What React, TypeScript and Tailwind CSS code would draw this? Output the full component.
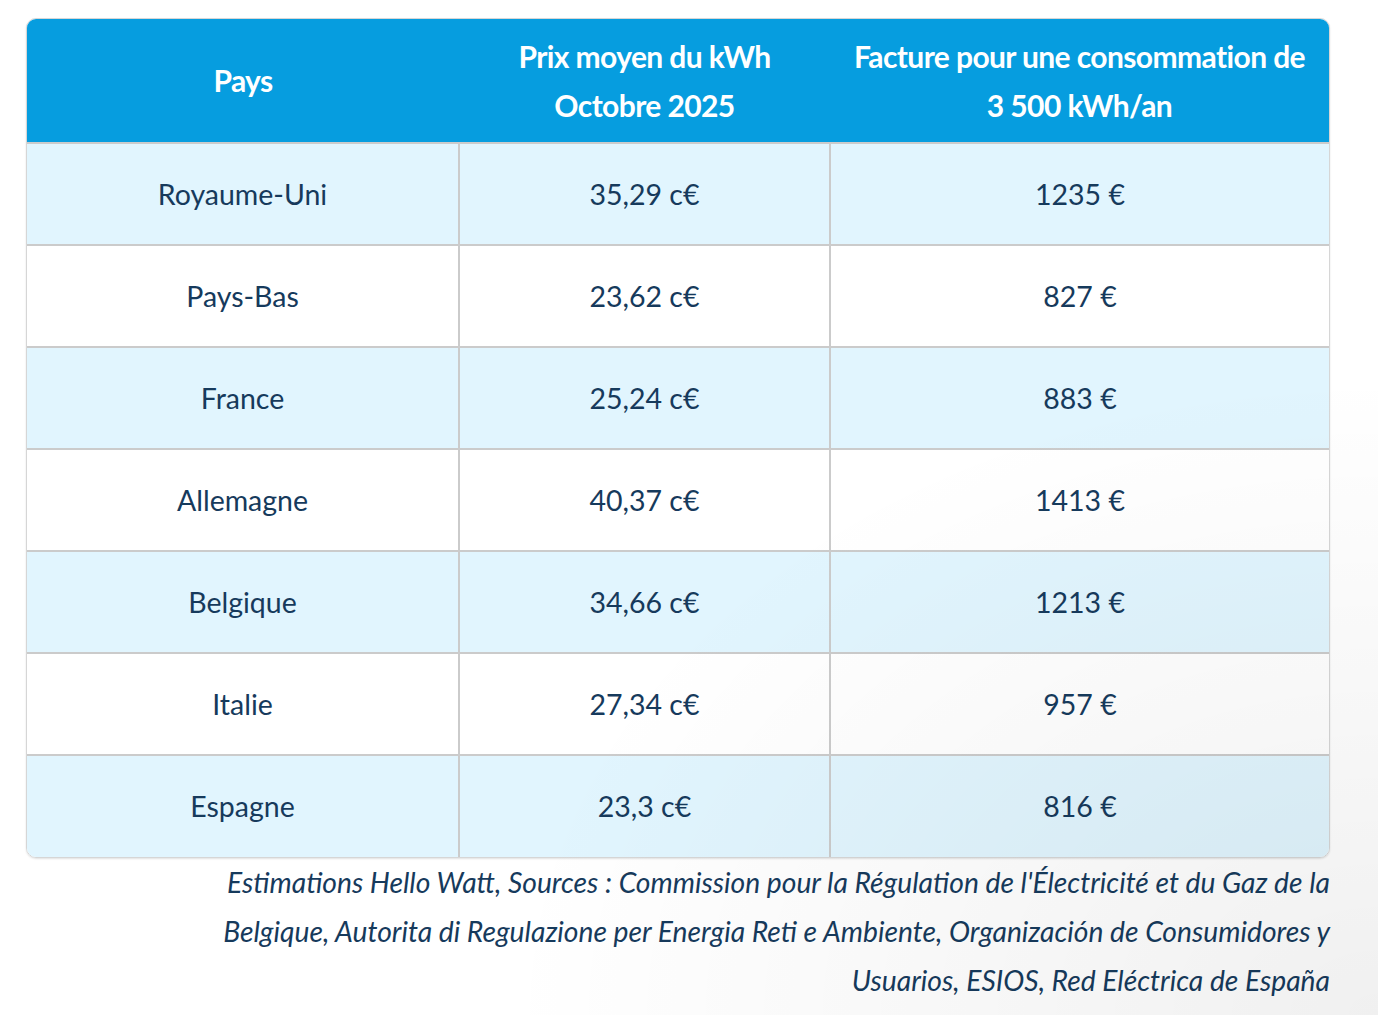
const rows = [
  { pays: "Royaume-Uni", prix: "35,29 c€", facture: "1235 €" },
  { pays: "Pays-Bas", prix: "23,62 c€", facture: "827 €" },
  { pays: "France", prix: "25,24 c€", facture: "883 €" },
  { pays: "Allemagne", prix: "40,37 c€", facture: "1413 €" },
  { pays: "Belgique", prix: "34,66 c€", facture: "1213 €" },
  { pays: "Italie", prix: "27,34 c€", facture: "957 €" },
  { pays: "Espagne", prix: "23,3 c€", facture: "816 €" },
]

export default function App() {
  return (
    <div className="relative min-h-screen w-full bg-white font-['Lato',sans-serif] text-[#163a5c]">
      <div className="pl-[26px] pt-[18px] w-[1330px]">
        <div className="overflow-hidden rounded-[10px] border border-[#d6d6d6] shadow-[0_1px_2px_rgba(0,0,0,0.12)]">
          <table className="w-full border-collapse table-fixed">
            <colgroup>
              <col className="w-[432px]" />
              <col className="w-[371px]" />
              <col />
            </colgroup>
            <thead>
              <tr className="bg-[#069ddf] text-white h-[124px]">
                <th className="font-bold text-[30px] leading-[49px] tracking-[-0.6px] px-2">Pays</th>
                <th className="font-bold text-[30px] leading-[49px] tracking-[-0.6px] px-2">
                  Prix moyen du kWh
                  <br />
                  Octobre 2025
                </th>
                <th className="font-bold text-[30px] leading-[49px] tracking-[-0.6px] px-2">
                  Facture pour une consommation de
                  <br />3 500 kWh/an
                </th>
              </tr>
            </thead>
            <tbody>
              {rows.map((r, i) => (
                <tr key={r.pays} className={i % 2 === 0 ? "bg-[#e1f5fe] h-[102px]" : "bg-white h-[102px]"}>
                  <td className="border-t-2 border-[#cbcbcb] text-center text-[28.5px]">{r.pays}</td>
                  <td className="border-t-2 border-l-2 border-[#cbcbcb] text-center text-[28.5px]">{r.prix}</td>
                  <td className="border-t-2 border-l-2 border-[#cbcbcb] text-center text-[28.5px]">{r.facture}</td>
                </tr>
              ))}
            </tbody>
          </table>
        </div>
        <p className="mt-0 text-right italic text-[28.25px] leading-[49px]">
          Estimations Hello Watt, Sources : Commission pour la Régulation de l'Électricité et du Gaz de la
          <br />
          Belgique, Autorita di Regulazione per Energia Reti e Ambiente, Organización de Consumidores y
          <br />
          Usuarios, ESIOS, Red Eléctrica de España
        </p>
      </div>
      <div className="pointer-events-none absolute inset-0 bg-[radial-gradient(ellipse_at_100%_100%,rgba(0,0,0,0.06),rgba(0,0,0,0)_45%)]" />
    </div>
  )
}
